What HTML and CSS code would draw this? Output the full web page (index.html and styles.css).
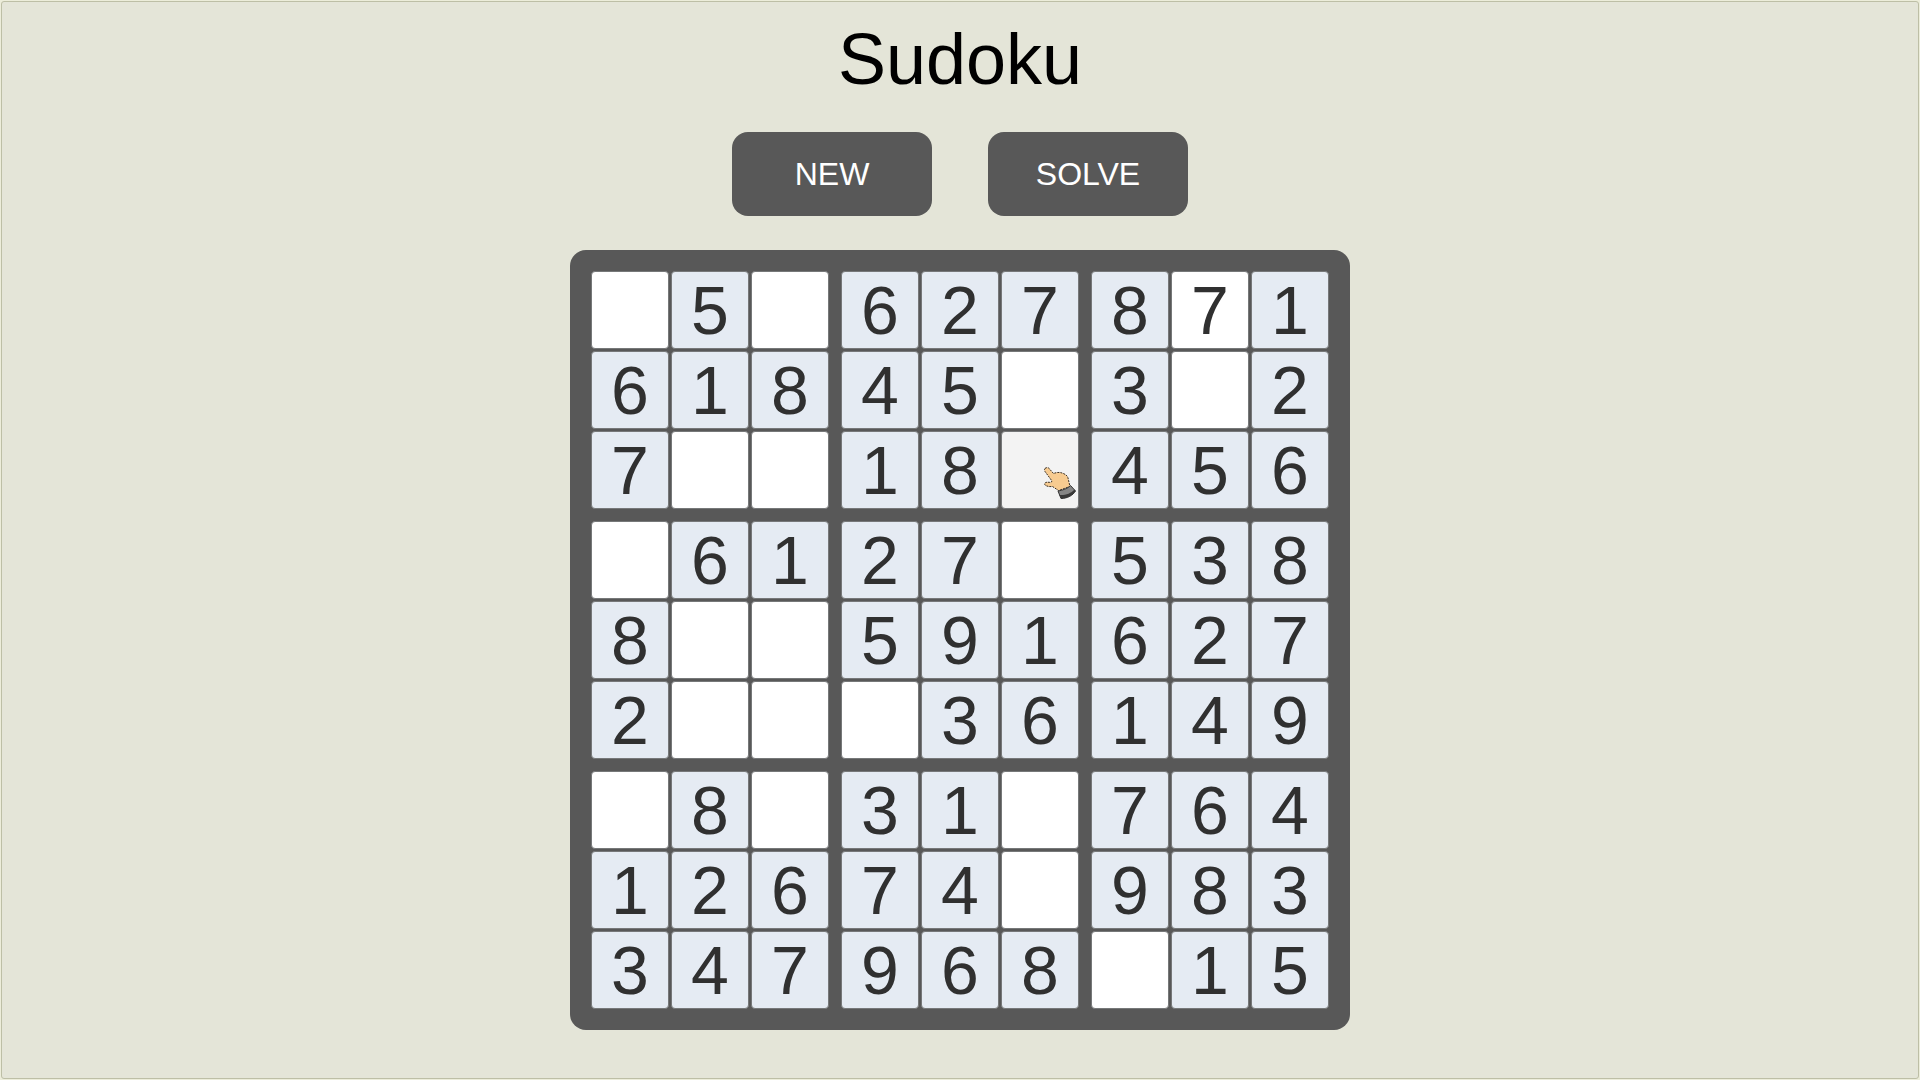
FILE: index.html
```html
<!DOCTYPE html>
<html lang="en">
<head>
    <meta charset="UTF-8">
    <meta name="viewport" content="width=device-width, initial-scale=1.0">
    <title>Sudoku</title>
    <link rel="stylesheet" href="styles.css">
</head>
<body>
    <main class="game">
        <h1 class="title">Sudoku</h1>
        <div class="controls">
            <button type="button" class="button">NEW</button>
            <button type="button" class="button">SOLVE</button>
        </div>
        <div class="board" id="board"></div>
    </main>
    <template id="hand">
        <svg class="hand" viewBox="0 0 34 34" aria-hidden="true">
            <path d="M2 2.500C3.500 1 6 1.500 7 3.500L10.500 7.500C13 6.500 16.500 6 19 7C22 8 24.500 9.500 25 12L27 20.500L15.500 24.500L9.500 20.500C6 21 2 20 1.500 18C2 16 4 16 8 16.500L9 15L2 5.500C1.300 4.500 1.300 3.500 2 2.500Z" fill="#f7cb90" stroke="#3b2f22" stroke-width="1" stroke-dasharray="2 1"/>
            <path d="M15 25C19 24.500 25 22.500 27.500 19.500L32.500 25C30 29.500 24 32.500 18 32.500Z" fill="#858585" stroke="#333" stroke-width="1"/>
            <path d="M16.500 29C22 29.500 28 27.500 31.500 23.500L32.500 25C30 29.500 24 32.500 18 32.500Z" fill="#383838"/>
        </svg>
    </template>
    <script src="script.js"></script>
</body>
</html>
```
FILE: styles.css
```css
* {
    box-sizing: border-box;
}
html {
    background-color: #ecedda;
}
body {
    margin: 0;
    padding: 1px;
    min-height: 100vh;
    display: flex;
    font-family: "Liberation Sans", Arial, sans-serif;
}
.game {
    flex: 1;
    display: flex;
    flex-direction: column;
    align-items: center;
    padding-top: 16px;
    background-color: #e4e5d8;
    border: 1px solid #bdbfa6;
    border-radius: 3px;
}
.title {
    margin: 0;
    font-size: 72px;
    line-height: 82px;
    font-weight: normal;
    color: #000;
}
.controls {
    display: flex;
    gap: 56px;
    margin: 32px 0 34px;
}
.button {
    width: 200px;
    height: 84px;
    padding: 0;
    border: none;
    border-radius: 16px;
    background-color: #585858;
    color: #fff;
    font-family: inherit;
    font-size: 32px;
    cursor: pointer;
}
.button:hover {
    background-color: #444;
}
.board {
    display: grid;
    grid-template-columns: repeat(3, auto);
    gap: 10px;
    padding: 20px;
    border-radius: 16px;
    background-color: #585858;
}
.box {
    display: grid;
    grid-template-columns: repeat(3, 80px);
}
.cell {
    position: relative;
    height: 80px;
    padding: 1px;
}
.cell input {
    display: block;
    width: 100%;
    height: 100%;
    padding: 0;
    border: 1px solid #767879;
    border-radius: 4px;
    outline: none;
    background-color: #fff;
    color: #303030;
    font-family: inherit;
    font-size: 68px;
    line-height: 76px;
    text-align: center;
}
.cell input.given {
    background-color: #e5ebf3;
}
.cell input.active,
.cell input:hover:not(.given) {
    background-color: #f3f3f3;
}
.hand {
    position: absolute;
    left: 43px;
    top: 36px;
    width: 34px;
    height: 34px;
    pointer-events: none;
}
```
FILE: script.js
```js
// 0 = empty cell
const puzzle = [
    [0, 5, 0, 6, 2, 7, 8, 7, 1],
    [6, 1, 8, 4, 5, 0, 3, 0, 2],
    [7, 0, 0, 1, 8, 0, 4, 5, 6],
    [0, 6, 1, 2, 7, 0, 5, 3, 8],
    [8, 0, 0, 5, 9, 1, 6, 2, 7],
    [2, 0, 0, 0, 3, 6, 1, 4, 9],
    [0, 8, 0, 3, 1, 0, 7, 6, 4],
    [1, 2, 6, 7, 4, 0, 9, 8, 3],
    [3, 4, 7, 9, 6, 8, 0, 1, 5]
];
// filled in by the player, "row,col"
const entered = ['0,7'];
const active = '2,5';

const board = document.getElementById('board');

for (let b = 0; b < 9; b++) {
    const box = document.createElement('div');
    box.className = 'box';
    for (let i = 0; i < 9; i++) {
        const row = Math.floor(b / 3) * 3 + Math.floor(i / 3);
        const col = (b % 3) * 3 + (i % 3);
        const key = row + ',' + col;
        const value = puzzle[row][col];

        const cell = document.createElement('div');
        cell.className = 'cell';
        const input = document.createElement('input');
        input.type = 'text';
        input.maxLength = 1;
        input.setAttribute('aria-label', 'Row ' + (row + 1) + ', column ' + (col + 1));
        if (value) input.value = value;
        if (value && !entered.includes(key)) {
            input.readOnly = true;
            input.className = 'given';
        }
        cell.appendChild(input);
        if (key === active) {
            input.className = 'active';
            cell.appendChild(document.getElementById('hand').content.cloneNode(true));
        }
        box.appendChild(cell);
    }
    board.appendChild(box);
}
```
